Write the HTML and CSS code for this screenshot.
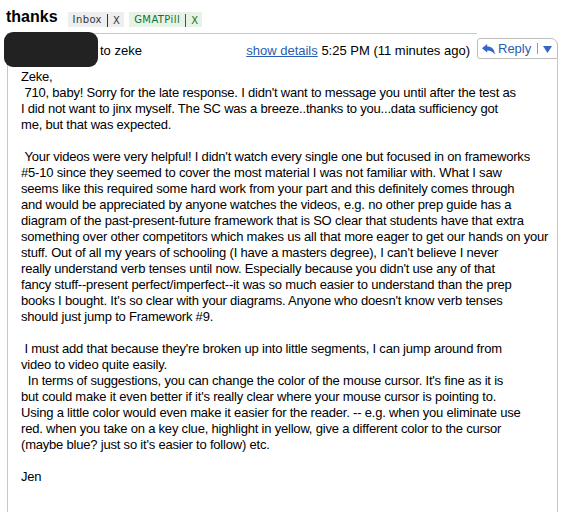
FILE: index.html
```html
<!DOCTYPE html>
<html>
<head>
<meta charset="utf-8">
<title>thanks</title>
<link rel="stylesheet" href="styles.css">
</head>
<body>
<div class="subject-row">
  <h1 class="subject">thanks</h1>
  <span class="label label-inbox"><span class="label-name">Inbox</span><span class="label-x">X</span></span>
  <span class="label label-gmat"><span class="label-name">GMATPill</span><span class="label-x">X</span></span>
</div>
<div class="message">
  <div class="msg-head">
    <div class="head-info">
      <span class="sender"></span>
      <span class="recipients">to zeke</span>
      <span class="meta"><a class="details-link" href="#">show details</a> 5:25 PM (11 minutes ago)</span>
    </div>
    <div class="reply-col">
      <div class="reply-btn">
        <svg class="reply-icon" width="13" height="11" viewBox="0 0 13 11"><path d="M0 4.2 L5.2 0 V2.6 C9.6 2.6 12.6 5 12.8 10.6 C11 7.6 8.6 6.4 5.2 6.4 V8.6 Z" fill="#3566c4"/></svg>
        <span class="reply-text">Reply</span>
        <span class="reply-sep"></span>
        <svg class="reply-caret" width="9" height="7" viewBox="0 0 9 7"><polygon points="0,0 9,0 4.5,7" fill="#3566c4"/></svg>
      </div>
      <div class="reply-fill"></div>
    </div>
  </div>
  <div class="msg-body">
    <p>Zeke,<br>&nbsp;710, baby! Sorry for the late response. I didn't want to message you until after the test as<br>I did not want to jinx myself. The SC was a breeze..thanks to you...data sufficiency got<br>me, but that was expected.</p>
    <p>&nbsp;Your videos were very helpful! I didn't watch every single one but focused in on frameworks<br>#5-10 since they seemed to cover the most material I was not familiar with. What I saw<br>seems like this required some hard work from your part and this definitely comes through<br>and would be appreciated by anyone watches the videos, e.g. no other prep guide has a<br>diagram of the past-present-future framework that is SO clear that students have that extra<br>something over other competitors which makes us all that more eager to get our hands on your<br>stuff. Out of all my years of schooling (I have a masters degree), I can't believe I never<br>really understand verb tenses until now. Especially because you didn't use any of that<br>fancy stuff--present perfect/imperfect--it was so much easier to understand than the prep<br>books I bought. It's so clear with your diagrams. Anyone who doesn't know verb tenses<br>should just jump to Framework #9.</p>
    <p>&nbsp;I must add that because they're broken up into little segments, I can jump around from<br>video to video quite easily.<br>&nbsp;&nbsp;In terms of suggestions, you can change the color of the mouse cursor. It's fine as it is<br>but could make it even better if it's really clear where your mouse cursor is pointing to.<br>Using a little color would even make it easier for the reader. -- e.g. when you eliminate use<br>red. when you take on a key clue, highlight in yellow, give a different color to the cursor<br>(maybe blue? just so it's easier to follow) etc.</p>
    <p>Jen</p>
  </div>
</div>
</body>
</html>
```

FILE: styles.css
```css
html, body {
  margin: 0;
  padding: 0;
  background: #fff;
}
body {
  font-family: "Liberation Sans", Arial, sans-serif;
  font-size: 13px;
  color: #000;
}
.subject-row {
  display: flex;
  align-items: flex-start;
  height: 33px;
  box-sizing: border-box;
  padding: 7px 0 0 6px;
}
.subject {
  margin: 0;
  font-size: 16px;
  font-weight: bold;
  line-height: 20px;
  color: #000;
}
.label {
  display: flex;
  align-items: center;
  height: 15px;
  margin-top: 5px;
  padding: 0 4px 0 5px;
  font-family: "DejaVu Sans", Verdana, sans-serif;
  font-size: 10px;
  letter-spacing: 0.4px;
  line-height: 15px;
}
.label-inbox {
  margin-left: 10px;
  background: #eeeeee;
  color: #333;
}
.label-gmat {
  margin-left: 5px;
  background: #e6f3e6;
  color: #157030;
}
.label-x {
  margin-left: 5px;
  padding-left: 5px;
  border-left: 1px solid currentColor;
  height: 13px;
  line-height: 13px;
  margin-top: 2px;
}
.message {
  width: 551px;
  margin-left: 7px;
  box-sizing: border-box;
  border-left: 1px solid #c8c8c8;
}
.msg-head {
  display: flex;
}
.head-info {
  flex: 1;
  display: flex;
  align-items: flex-start;
  border-top: 1px solid #c8c8c8;
  line-height: 16px;
}
.sender {
  display: block;
  width: 94px;
  height: 35px;
  margin: -2px 0 0 -4px;
  background: #222;
  border-radius: 9px;
}
.recipients {
  margin: 9px 0 0 2px;
}
.meta {
  margin: 9px 7px 0 auto;
}
.details-link {
  color: #2a5db0;
  text-decoration: underline;
}
.reply-col {
  display: flex;
  flex-direction: column;
  width: 81px;
}
.reply-btn {
  display: flex;
  align-items: center;
  height: 21px;
  box-sizing: border-box;
  margin-top: 5px;
  padding: 0 4px 0 4px;
  border: 1px solid #bdbdbd;
  border-radius: 3px 7px 0 3px;
  color: #2a5db0;
  line-height: 16px;
}
.reply-icon {
  display: block;
  margin-top: 1px;
}
.reply-text {
  margin-left: 3px;
}
.reply-sep {
  display: block;
  width: 1px;
  height: 11px;
  margin-left: 6px;
  background: #9a9a9a;
}
.reply-caret {
  display: block;
  margin-left: 5px;
  margin-top: 1px;
}
.reply-fill {
  flex: 1;
  border-right: 1px solid #c8c8c8;
}
.msg-body {
  border-right: 1px solid #c8c8c8;
  padding: 2px 4px 40px 13px;
  line-height: 16px;
  letter-spacing: -0.2px;
  white-space: nowrap;
  overflow: hidden;
}
.msg-body p {
  margin: 0 0 16px 0;
}
```
